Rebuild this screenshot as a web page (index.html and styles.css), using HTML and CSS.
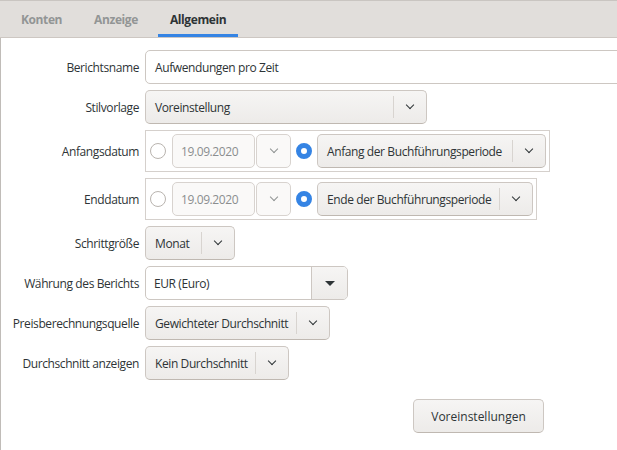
FILE: index.html
```html
<!DOCTYPE html>
<html lang="de">
<head>
<meta charset="utf-8">
<title>Berichtsoptionen</title>
<link rel="stylesheet" href="styles.css">
</head>
<body>
<div class="tabs">
  <div class="tab">Konten</div>
  <div class="tab">Anzeige</div>
  <div class="tab active">Allgemein</div>
</div>
<div class="page">
  <div class="form">
    <div class="label">Berichtsname</div>
    <div class="entry wide">Aufwendungen pro Zeit</div>

    <div class="label">Stilvorlage</div>
    <div class="combo w-stil"><span class="ctext">Voreinstellung</span><span class="cbtn"><span class="chev"></span></span></div>

    <div class="label">Anfangsdatum</div>
    <div class="frame">
      <span class="radio"></span>
      <span class="date">19.09.2020</span>
      <span class="datebtn"><span class="chev dim"></span></span>
      <span class="radio on"></span>
      <div class="combo w-anfang"><span class="ctext">Anfang der Buchführungsperiode</span><span class="cbtn"><span class="chev"></span></span></div>
    </div>

    <div class="label">Enddatum</div>
    <div class="frame">
      <span class="radio"></span>
      <span class="date">19.09.2020</span>
      <span class="datebtn"><span class="chev dim"></span></span>
      <span class="radio on"></span>
      <div class="combo w-ende"><span class="ctext">Ende der Buchführungsperiode</span><span class="cbtn"><span class="chev"></span></span></div>
    </div>

    <div class="label">Schrittgröße</div>
    <div class="combo w-schritt"><span class="ctext">Monat</span><span class="cbtn"><span class="chev"></span></span></div>

    <div class="label">Währung des Berichts</div>
    <div class="currency"><span class="cur-text">EUR (Euro)</span><span class="cur-btn"><span class="tri"></span></span></div>

    <div class="label">Preisberechnungsquelle</div>
    <div class="combo w-preis"><span class="ctext">Gewichteter Durchschnitt</span><span class="cbtn"><span class="chev"></span></span></div>

    <div class="label">Durchschnitt anzeigen</div>
    <div class="combo w-durch"><span class="ctext">Kein Durchschnitt</span><span class="cbtn"><span class="chev"></span></span></div>

    <div class="footer">
      <button class="button" type="button">Voreinstellungen</button>
    </div>
  </div>
</div>
</body>
</html>
```
FILE: styles.css
```css
html, body {
  margin: 0;
  padding: 0;
  height: 100%;
  overflow: hidden;
  background: #ffffff;
}
body {
  font-family: "Open Sans", "Noto Sans", sans-serif;
  font-size: 12px;
  letter-spacing: -0.4px;
  color: #2e3436;
}
.tabs {
  display: flex;
  gap: 8px;
  height: 36px;
  background: #e1dedb;
  border-top: 1px solid #c9c5c1;
  border-bottom: 1px solid #cdc7c2;
  padding-left: 9px;
}
.tab {
  display: flex;
  align-items: center;
  padding: 3px 12px 0;
  font-weight: bold;
  font-size: 12px;
  color: #929595;
  border-bottom: 3px solid transparent;
}
.tab.active {
  color: #2e3436;
  border-bottom-color: #3584e4;
}
.page {
  border-left: 1px solid #c0bcb8;
  height: calc(100% - 38px);
}
.form {
  display: grid;
  grid-template-columns: 138px max-content;
  column-gap: 6px;
  row-gap: 6px;
  padding-top: 12px;
  align-items: center;
}
.label {
  text-align: right;
  white-space: nowrap;
}
.entry {
  box-sizing: border-box;
  height: 34px;
  border: 1px solid #cdc7c2;
  border-radius: 5px;
  background: #fff;
  display: flex;
  align-items: center;
  padding-left: 9px;
}
.wide {
  width: 500px;
}
.combo {
  box-sizing: border-box;
  height: 34px;
  display: flex;
  align-items: stretch;
  border: 1px solid #cdc7c2;
  border-bottom-color: #bfb8b1;
  border-radius: 5px;
  background: linear-gradient(#f6f5f4, #edebe9);
  justify-self: start;
}
.ctext {
  flex: 1;
  display: flex;
  align-items: center;
  padding-left: 9px;
  white-space: nowrap;
  position: relative;
}
.ctext::after {
  content: "";
  position: absolute;
  right: 0;
  top: 5px;
  bottom: 5px;
  width: 1px;
  background: #d8d4d0;
}
.cbtn {
  width: 32px;
  display: flex;
  align-items: center;
  justify-content: center;
}
.chev {
  width: 5px;
  height: 5px;
  border-right: 1.6px solid #2e3436;
  border-bottom: 1.6px solid #2e3436;
  transform: translateY(-2px) rotate(45deg);
}
.chev.dim {
  border-color: #8f9393;
  border-width: 1.2px;
}
.w-stil { width: 282px; }
.w-anfang { width: 229px; }
.w-ende { width: 216px; }
.w-schritt { width: 90px; }
.w-preis { width: 185px; }
.w-durch { width: 144px; }
.frame {
  box-sizing: border-box;
  height: 42px;
  display: flex;
  align-items: center;
  border: 1px solid #d5d0cc;
  padding: 0 3px 0 2px;
  justify-self: start;
}
.radio {
  box-sizing: border-box;
  width: 16px;
  height: 16px;
  border-radius: 50%;
  border: 1px solid #b9b4af;
  background: #fff;
  margin-left: 2px;
  margin-right: 6px;
}
.radio.on {
  border: 5px solid #3584e4;
  margin-left: 5px;
  margin-right: 5px;
}
.date {
  box-sizing: border-box;
  width: 83px;
  height: 34px;
  display: flex;
  align-items: center;
  padding-left: 8px;
  border: 1px solid #d8d3cf;
  border-radius: 5px;
  background: #faf9f8;
  color: #8b8e8f;
}
.datebtn {
  box-sizing: border-box;
  width: 35px;
  height: 34px;
  margin-left: 1px;
  display: flex;
  align-items: center;
  justify-content: center;
  border: 1px solid #d8d3cf;
  border-radius: 5px;
  background: #faf9f8;
}
.currency {
  box-sizing: border-box;
  width: 203px;
  height: 34px;
  display: flex;
  border: 1px solid #cdc7c2;
  border-radius: 5px;
  background: #fff;
  justify-self: start;
  overflow: hidden;
}
.cur-text {
  flex: 1;
  display: flex;
  align-items: center;
  padding-left: 8px;
}
.cur-btn {
  width: 35px;
  display: flex;
  align-items: center;
  justify-content: center;
  border-left: 1px solid #cdc7c2;
  background: linear-gradient(#f6f5f4, #edebe9);
}
.tri {
  width: 0;
  height: 0;
  border-left: 5px solid transparent;
  border-right: 5px solid transparent;
  border-top: 5px solid #2e3436;
}
.footer {
  grid-column: 2;
  display: flex;
  margin-top: 13px;
  padding-left: 268px;
}
.button {
  box-sizing: border-box;
  width: 131px;
  height: 34px;
  font: inherit;
  color: #2e3436;
  border: 1px solid #cdc7c2;
  border-bottom-color: #bfb8b1;
  border-radius: 5px;
  background: linear-gradient(#f6f5f4, #edebe9);
}
```
